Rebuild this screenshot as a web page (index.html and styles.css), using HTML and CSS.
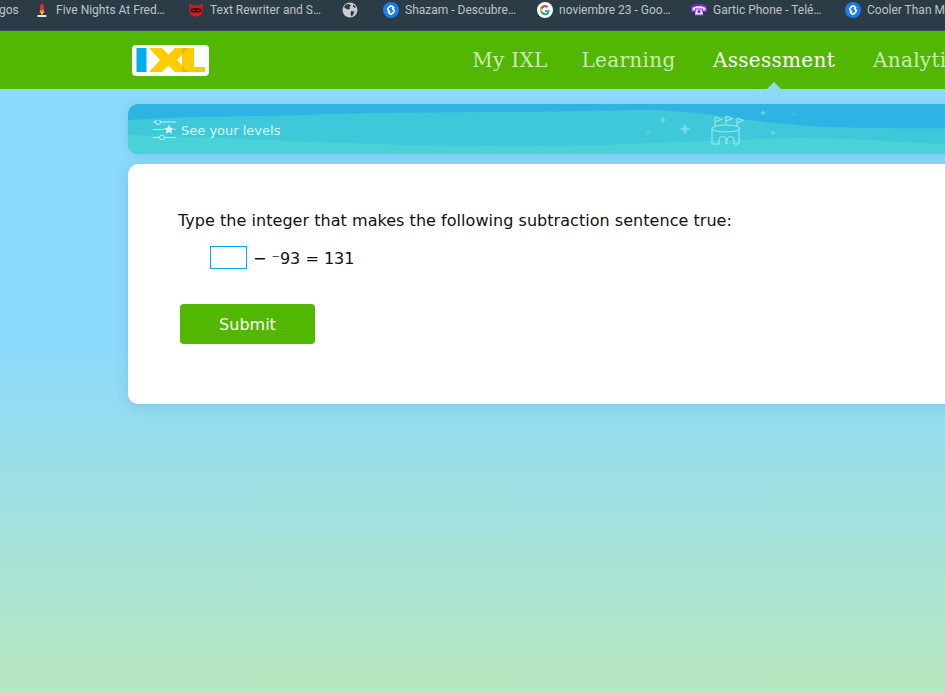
FILE: index.html
```html
<!DOCTYPE html>
<html lang="en">
<head>
  <meta charset="UTF-8" />
  <title>IXL | Assessment</title>
  <link rel="stylesheet" href="styles.css">
</head>
<body>
  <!-- browser bookmarks -->
  <div class="bookmarks">
    <div class="bm-start">gos</div>
    <div class="bm">
      <svg class="fav" viewBox="0 0 16 16"><path d="M8 1C9.500 2.500 10 4 10 6v2H6V6c0-2 .5-3.500 2-5z" fill="#d8342c"/><path d="M6 8h4v3H6z" fill="#e8843a"/><path d="M6 8 4.500 11H6zM10 8l1.500 3H10z" fill="#a82c28"/><path d="M7 10h2v2.500H7z" fill="#f0c04a"/><path d="M3.500 13h9v2h-9z" fill="#dfe3e4"/></svg>
      <span class="bm-text">Five Nights At Freddy's</span>
    </div>
    <div class="bm">
      <svg class="fav" viewBox="0 0 16 16"><path d="M1 1l3.500 2.500A7 7 0 0 1 8 3a7 7 0 0 1 3.500.5L15 1l-.5 5a7 6.500 0 0 1 0 4c-.8 3-3.500 4.500-6.500 4.500S2.300 13 1.500 10a7 6.500 0 0 1 0-4z" fill="#e0141c"/><path d="M2.500 7c3-1.500 8-1.500 11 0 .3 2-1 3.500-2.500 3.500H5C3.500 10.500 2.200 9 2.500 7z" fill="#3a1216"/><path d="M4.500 7.500 7 8.800H4.800zM11.500 7.500 9 8.800h2.200z" fill="#ff5058"/></svg>
      <span class="bm-text">Text Rewriter and Summarizer</span>
    </div>
    <div class="bm bm-icon">
      <svg class="fav" viewBox="0 0 16 16"><circle cx="8" cy="8" r="7.500" fill="#c8cdd0"/><path d="M4 2.500 7 2l2 1.500L7.500 5 8 7 5.500 7.500 3 6 2 5zM9 9l3.500.5L11 13l-1.500 1.500L8.500 12zM11 2.500l3 2.500-1.500 1L11 4.500z" fill="#2b3c47"/></svg>
    </div>
    <div class="bm">
      <svg class="fav" viewBox="0 0 16 16"><circle cx="8" cy="8" r="8" fill="#1a7cf5"/><g fill="none" stroke="#fff" stroke-width="1.700" stroke-linecap="round"><path d="M10.600 5.600 9.300 4.500a1.800 1.800 0 0 0-2.500 0L5.300 6a1.700 1.700 0 0 0 0 2.400l1.200 1.100"/><path d="M5.400 10.400l1.300 1.100a1.800 1.800 0 0 0 2.500 0L10.700 10a1.700 1.700 0 0 0 0-2.400L9.500 6.500"/></g></svg>
      <span class="bm-text">Shazam - Descubre música</span>
    </div>
    <div class="bm">
      <svg class="fav" viewBox="0 0 16 16"><circle cx="8" cy="8" r="8" fill="#fff"/><path d="M12.800 8.200H8v1.700h2.800A3.100 3.100 0 1 1 10 5.700l1.200-1.200A4.800 4.800 0 1 0 12.800 8.200z" fill="#4285f4"/><path d="M3.700 5.800 5.200 7A3.100 3.100 0 0 1 10 5.700l1.200-1.200a4.800 4.800 0 0 0-7.500 1.300z" fill="#ea4335"/><path d="M3.700 10.200 5.200 9a3.100 3.100 0 0 0 5.600.9l1.500 1a4.800 4.800 0 0 1-8.600-.7z" fill="#34a853"/><path d="M3.700 5.800a4.800 4.800 0 0 0 0 4.400L5.200 9a3.100 3.100 0 0 1 0-2z" fill="#fbbc05"/></svg>
      <span class="bm-text">noviembre 23 - Google Docs</span>
    </div>
    <div class="bm">
      <svg class="fav" viewBox="0 0 16 16"><path d="M0 5c2-4 14-4 16 0v5h-3l-1-1v5H4V9l-1 1H0z" fill="#7d2bd0"/><path d="M1.500 6c2-2.500 11-2.500 13 0v2.500h-2.500V6.500h-8v2H1.500z" fill="#f3e6ff"/><path d="M5 7.500h6l1 5H4z" fill="#f3e6ff"/><circle cx="8" cy="9.500" r="1.600" fill="#7d2bd0"/></svg>
      <span class="bm-text">Gartic Phone - Teléfono</span>
    </div>
    <div class="bm">
      <svg class="fav" viewBox="0 0 16 16"><circle cx="8" cy="8" r="8" fill="#1a7cf5"/><g fill="none" stroke="#fff" stroke-width="1.700" stroke-linecap="round"><path d="M10.600 5.600 9.300 4.500a1.800 1.800 0 0 0-2.500 0L5.300 6a1.700 1.700 0 0 0 0 2.400l1.200 1.100"/><path d="M5.400 10.400l1.300 1.100a1.800 1.800 0 0 0 2.500 0L10.700 10a1.700 1.700 0 0 0 0-2.400L9.500 6.500"/></g></svg>
      <span class="bm-text">Cooler Than Me</span>
    </div>
  </div>

  <header class="site-header">
    <svg class="logo" viewBox="0 0 77 31">
      <rect width="77" height="31" rx="4" fill="#fff"/>
      <rect x="4.500" y="3" width="10" height="24" fill="#00aeef"/>
      <path d="M50 3h12v19h11v5H50z" fill="#ffcc00"/>
      <path d="M17 3h13l6.500 6.500L43 3h13L45 15l11 12H43l-6.500-6.500L30 27H17l11-12z" fill="#ffcc00"/>
      <path d="M50 3h6l-6 6.500zM50 21l6 6h-6z" fill="#e8b900"/>
    </svg>
    <nav class="main-nav">
      <a>My IXL</a>
      <a>Learning</a>
      <a class="active">Assessment</a>
      <a>Analytics</a>
    </nav>
  </header>

  <main class="content">
    <div class="levels-bar">
      <svg class="waves" viewBox="0 0 917 50" preserveAspectRatio="none">
        <path d="M0 16C60 12 120 13 200 10 300 7 420 9 502 6 570 4 620 20 700 23 760 25 830 24 917 24V50H0z" fill="#3ec8d9"/>
        <path d="M0 31C120 34 260 44 420 42 500 41 580 36 672 34 750 35 830 42 917 46V50H0z" fill="#49d3d9"/>
      </svg>
      <div class="levels-link">
        <svg class="sliders" viewBox="0 0 24 20">
          <path d="M0 2h2.500M7.500 2H23M0 9.500h11M21 9.500h2M0 17.500h6.500M11.500 17.500H23" fill="none" stroke="#c5f3f5" stroke-width="1"/>
          <circle cx="5" cy="2" r="2.500" fill="none" stroke="#c5f3f5"/>
          <circle cx="9" cy="17.500" r="2.500" fill="none" stroke="#c5f3f5"/>
          <path d="m16 4.500 1.500 3.300 3.500.3-2.600 2.300.8 3.500-3.200-1.900-3.200 1.900.8-3.500L11 8.100l3.500-.3z" fill="#d5f7f7"/>
        </svg>
        <span>See your levels</span>
      </div>
      <svg class="castle" viewBox="0 0 160 40" fill="none">
        <path d="M40 14l1.500 4.500 4.500 1.500-4.500 1.500L40 26l-1.500-4.500L34 20l4.500-1.500z" fill="#7bdde2"/>
        <path d="M18 7l1 3 3 1-3 1-1 3-1-3-3-1 3-1z" fill="#6cd8de"/>
        <path d="M3 21l.8 2.200L6 24l-2.200.8L3 27l-.8-2.200L0 24l2.200-.8z" fill="#62d3da"/>
        <path d="M118 1l.8 2.200L121 4l-2.200.8L118 7l-.8-2.200L115 4l2.200-.8z" fill="#72d9e2"/>
        <path d="M128 21l.9 2.100 2.100.9-2.100.9-.9 2.100-.9-2.100-2.100-.9 2.100-.9z" fill="#6cd8de"/>
        <circle cx="149" cy="5" r="1" fill="#55c6e2"/>
        <g stroke="#a5ebee" stroke-width="1">
          <ellipse cx="81" cy="19.500" rx="14" ry="3.500"/>
          <path d="M67 19.500V34c0 .6.400 1 1 1h6v-4a3.500 3.500 0 0 1 7 0v4h1v-4a3.500 3.500 0 0 1 7 0v4h4c.6 0 1-.4 1-1V19.500"/>
          <path d="M70 17V8l6.500 2.500L70 13M81 15V7l6.500 2.500L81 12M92 17V9l6.500 2.500L92 14"/>
        </g>
      </svg>
    </div>

    <section class="question-card">
      <p class="prompt">Type the integer that makes the following subtraction sentence true:</p>
      <div class="equation">
        <input class="answer" type="text">
        <span>− ⁻93 = 131</span>
      </div>
      <button class="submit-btn">Submit</button>
    </section>
  </main>
</body>
</html>
```

FILE: styles.css
```css
:root {
  --green: #51b700;
  --sky: #8bd9fb;
}
html, body {
  height: 100%;
  overflow: hidden;
}
body {
  margin: 0;
  background: linear-gradient(180deg, var(--sky) 50%, #b8e8bf 100%);
  font-family: "DejaVu Sans", Verdana, sans-serif;
  color: #111;
}
.bookmarks {
  display: flex;
  height: 30px;
  align-items: flex-start;
  background: #2b3c47;
  border-bottom: 1px solid #3d4d57;
  font-family: Roboto, sans-serif;
  font-size: 12px;
  line-height: 20px;
  color: #bcc4c9;
  white-space: nowrap;
  overflow: hidden;
}
.bm-start {
  flex: 0 0 34px;
  margin-left: -1px;
  padding-right: 1px;
}
.bm {
  flex: 0 0 154px;
  display: flex;
  align-items: center;
  gap: 6px;
  height: 20px;
}
.bm-icon {
  flex-basis: 41px;
}
.fav {
  flex: none;
  width: 16px;
  height: 16px;
}
.bm-text {
  width: 112px;
  overflow: hidden;
  text-overflow: ellipsis;
}
.site-header {
  display: flex;
  align-items: center;
  height: 58px;
  padding-left: 132px;
  background: var(--green);
}
.logo {
  flex: none;
  width: 77px;
  height: 31px;
}
.main-nav {
  display: grid;
  grid-template-columns: 72px 93px 126px auto;
  column-gap: 36px;
  justify-items: center;
  margin-left: 265px;
  font-family: "DejaVu Serif", serif;
  font-size: 20px;
  letter-spacing: .3px;
  color: #cfeab6;
  white-space: nowrap;
}
.main-nav a {
  position: relative;
}
.main-nav .active {
  color: #fff;
}
.main-nav .active::after {
  content: "";
  position: absolute;
  left: 50%;
  bottom: -18px;
  margin-left: -8px;
  border: 8px solid transparent;
  border-top: 0;
  border-bottom-color: var(--sky);
}
.content {
  margin-right: -100px;
  padding: 15px 0 0 128px;
}
.levels-bar {
  position: relative;
  display: flex;
  align-items: center;
  height: 50px;
  border-radius: 10px;
  background: #2db3e4;
  box-shadow: 0 1px 8px rgba(60, 130, 180, .2);
  overflow: hidden;
}
.waves {
  position: absolute;
  inset: 0;
  width: 100%;
  height: 100%;
}
.levels-link {
  position: relative;
  display: flex;
  align-items: center;
  gap: 4px;
  padding: 2px 0 0 25px;
  font-size: 13px;
  color: #d5f7f7;
}
.sliders {
  width: 24px;
  height: 20px;
}
.castle {
  position: absolute;
  left: 517px;
  top: 5px;
  width: 160px;
  height: 40px;
}
.question-card {
  height: 240px;
  box-sizing: border-box;
  margin-top: 10px;
  padding: 47px 50px 0;
  border-radius: 10px;
  background: #fff;
  box-shadow: 0 2px 12px rgba(60, 130, 180, .25);
}
.prompt {
  margin: 0;
  font-size: 16px;
  line-height: 20px;
  letter-spacing: .04px;
}
.equation {
  display: flex;
  align-items: center;
  gap: 6px;
  margin: 15px 0 0 32px;
  font-size: 16px;
}
.equation span {
  padding-top: 2px;
}
.answer {
  width: 37px;
  height: 23px;
  box-sizing: border-box;
  padding: 0;
  border: 1px solid #00aeef;
  outline: none;
}
.submit-btn {
  display: block;
  width: 135px;
  height: 40px;
  margin: 35px 0 0 2px;
  border: none;
  border-radius: 4px;
  background: var(--green);
  color: #fff;
  font-family: inherit;
  font-size: 16px;
}
```
